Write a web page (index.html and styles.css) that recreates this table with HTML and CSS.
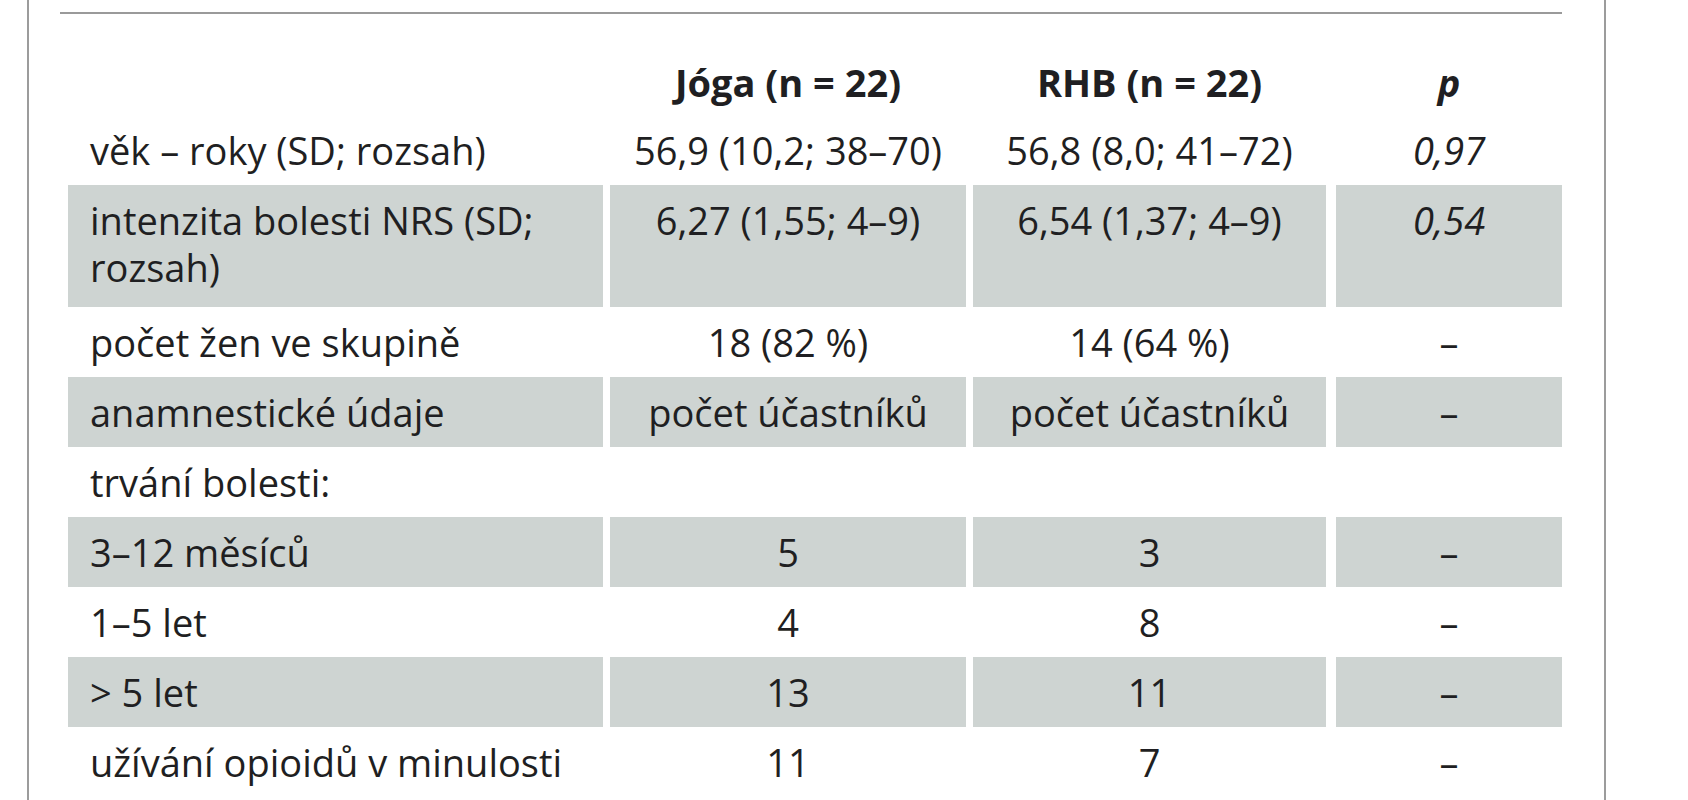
FILE: index.html
```html
<!DOCTYPE html>
<html lang="cs">
<head>
<meta charset="utf-8">
<title>Tabulka</title>
<link rel="stylesheet" href="styles.css">
</head>
<body>
<div class="frame">
  <div class="rule"></div>
  <div class="table">
    <div class="row head">
      <div class="cell c1"></div>
      <div class="cell c2">Jóga (n = 22)</div>
      <div class="cell c3">RHB (n = 22)</div>
      <div class="cell c4"><em>p</em></div>
    </div>
    <div class="row">
      <div class="cell c1">věk – roky (SD; rozsah)</div>
      <div class="cell c2">56,9 (10,2; 38–70)</div>
      <div class="cell c3">56,8 (8,0; 41–72)</div>
      <div class="cell c4"><em>0,97</em></div>
    </div>
    <div class="row shade tall">
      <div class="cell c1">intenzita bolesti NRS (SD;<br>rozsah)</div>
      <div class="cell c2">6,27 (1,55; 4–9)</div>
      <div class="cell c3">6,54 (1,37; 4–9)</div>
      <div class="cell c4"><em>0,54</em></div>
    </div>
    <div class="row">
      <div class="cell c1">počet žen ve skupině</div>
      <div class="cell c2">18 (82 %)</div>
      <div class="cell c3">14 (64 %)</div>
      <div class="cell c4">–</div>
    </div>
    <div class="row shade">
      <div class="cell c1">anamnestické údaje</div>
      <div class="cell c2">počet účastníků</div>
      <div class="cell c3">počet účastníků</div>
      <div class="cell c4">–</div>
    </div>
    <div class="row">
      <div class="cell c1">trvání bolesti:</div>
      <div class="cell c2"></div>
      <div class="cell c3"></div>
      <div class="cell c4"></div>
    </div>
    <div class="row shade">
      <div class="cell c1">3–12 měsíců</div>
      <div class="cell c2">5</div>
      <div class="cell c3">3</div>
      <div class="cell c4">–</div>
    </div>
    <div class="row">
      <div class="cell c1">1–5 let</div>
      <div class="cell c2">4</div>
      <div class="cell c3">8</div>
      <div class="cell c4">–</div>
    </div>
    <div class="row shade">
      <div class="cell c1">&gt; 5 let</div>
      <div class="cell c2">13</div>
      <div class="cell c3">11</div>
      <div class="cell c4">–</div>
    </div>
    <div class="row">
      <div class="cell c1">užívání opioidů v minulosti</div>
      <div class="cell c2">11</div>
      <div class="cell c3">7</div>
      <div class="cell c4">–</div>
    </div>
  </div>
</div>
</body>
</html>
```

FILE: styles.css
```css
html, body {
  margin: 0;
  padding: 0;
  background: #ffffff;
}

body {
  font-family: "Open Sans", "Noto Sans", sans-serif;
  font-size: 38px;
  color: #1f1f22;
  overflow: hidden;
}

.frame {
  margin-left: 27px;
  width: 1575px;
  height: 800px;
  border-left: 2px solid #9c9c9c;
  border-right: 2px solid #9c9c9c;
  overflow: hidden;
}

.rule {
  margin-top: 12px;
  margin-left: 31px;
  width: 1502px;
  height: 2px;
  background: #9a9a9a;
}

.table {
  margin-left: 39px;
  display: flex;
  flex-direction: column;
}

.row {
  display: grid;
  grid-template-columns: 535px 356px 353px 229px;
  column-gap: 7px;
  height: 70px;
}

.row.tall {
  height: 122px;
}

.row.head {
  height: 101px;
}

.cell {
  box-sizing: border-box;
  padding-top: 12px;
  line-height: 47px;
  text-align: center;
  white-space: nowrap;
}

.cell.c1 {
  text-align: left;
  padding-left: 22px;
}

.cell.c4 {
  margin-left: 3px;
}

.row.shade .cell {
  background: #ced4d2;
}

.row.head .cell {
  padding-top: 45px;
  font-weight: 700;
}

.row.head em {
  font-style: italic;
}

em {
  font-style: italic;
}
```
